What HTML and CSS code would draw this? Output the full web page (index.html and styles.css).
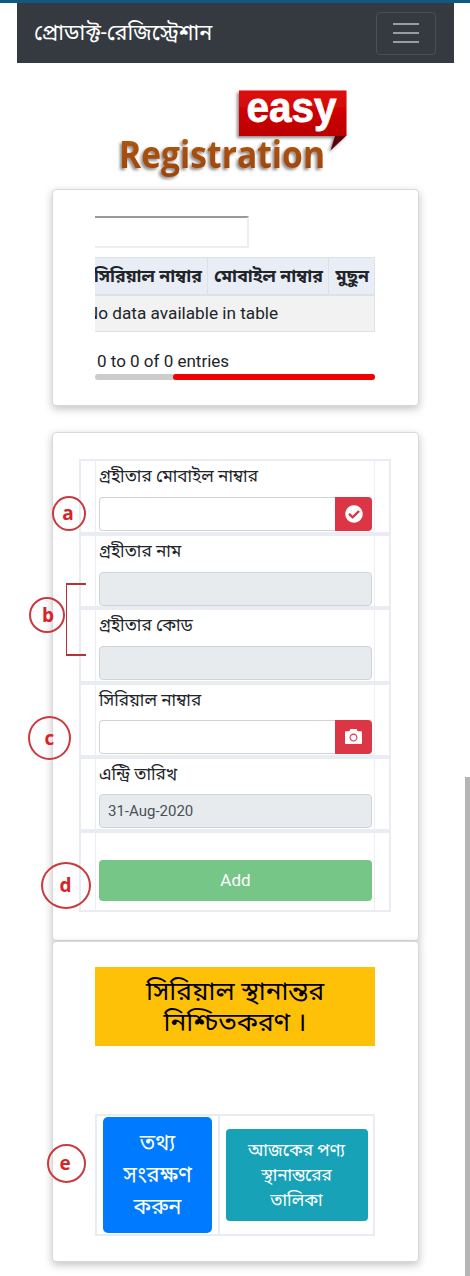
FILE: index.html
```html
<!DOCTYPE html>
<html lang="bn">
<head>
<meta charset="utf-8">
<title>প্রোডাক্ট-রেজিস্ট্রেশান</title>
<link rel="stylesheet" href="styles.css">
</head>
<body>
<div class="page">
  <header class="navbar">
    <span class="brand">প্রোডাক্ট-রেজিস্ট্রেশান</span>
    <button class="toggler" aria-label="Menu"><i></i><i></i><i></i></button>
  </header>

  <div class="logo">
    <svg width="250" height="110" viewBox="110 80 250 110">
      <defs>
        <linearGradient id="red" x1="0" y1="0" x2="0" y2="1"><stop offset="0" stop-color="#e00b0b"/><stop offset=".5" stop-color="#cc0505"/><stop offset="1" stop-color="#b00"/></linearGradient>
        <linearGradient id="brown" x1="0" y1="0" x2="0" y2="1"><stop offset="0" stop-color="#b45a14"/><stop offset="1" stop-color="#9c4406"/></linearGradient>
        <filter id="shade" x="-20%" y="-20%" width="140%" height="150%"><feDropShadow dx="-2" dy="2" stdDeviation="1.800" flood-color="#333" flood-opacity=".55"/></filter>
      </defs>
      <g filter="url(#shade)">
        <path d="M331 135.500H346.500L330.500 150.500L335 136Z" fill="#5b0508"/>
        <path d="M239 90.500H346.500V136H239Z" fill="url(#red)"/>
      </g>
      <text class="logo-easy" x="246.500" y="122" textLength="90" lengthAdjust="spacingAndGlyphs">easy</text>
      <text class="logo-reg" x="119" y="168" textLength="206" lengthAdjust="spacingAndGlyphs" filter="url(#shade)">Registration</text>
    </svg>
  </div>

  <main class="cards">
    <section class="card list-card">
      <div class="scroller">
        <div class="search"></div>
        <div class="table">
          <div class="thead"><span><b>সিরিয়াল নাম্বার</b></span><span><b>মোবাইল নাম্বার</b></span><span><b>মুছুন</b></span></div>
          <div class="tempty"><span>No data available in table</span></div>
        </div>
        <div class="info">0 to 0 of 0 entries</div>
        <div class="hbar"><div class="thumb"></div></div>
      </div>
    </section>

    <section class="card form-card">
      <div class="form">
        <div class="row tall"><label>গ্রহীতার মোবাইল নাম্বার</label>
          <div class="field"><div class="input"></div><button class="addon" aria-label="Check">
            <svg width="18" height="18" viewBox="0 0 512 512"><path fill="#fff" d="M504 256c0 136.967-111.033 248-248 248S8 392.967 8 256 119.033 8 256 8s248 111.033 248 248zM227.314 387.314l184-184c6.248-6.248 6.248-16.379 0-22.627l-22.627-22.627c-6.248-6.249-16.379-6.249-22.628 0L216 308.118l-70.059-70.059c-6.248-6.248-16.379-6.248-22.628 0l-22.627 22.627c-6.248 6.248-6.248 16.379 0 22.627l104 104c6.249 6.249 16.379 6.249 22.628.001z"/></svg></button></div></div>
        <div class="row"><label>গ্রহীতার নাম</label><div class="field"><div class="input off"></div></div></div>
        <div class="row tall"><label>গ্রহীতার কোড</label><div class="field"><div class="input off"></div></div></div>
        <div class="row tight"><label>সিরিয়াল নাম্বার</label>
          <div class="field"><div class="input"></div><button class="addon" aria-label="Camera">
            <svg class="camera" width="17" height="17" viewBox="0 0 512 512"><path fill="#fff" d="M512 120v336c0 14-10 24-24 24H24c-14 0-24-10-24-24V120c0-14 10-24 24-24h112l10-36c4-16 16-28 32-28h156c16 0 28 12 32 28l10 36h112c14 0 24 10 24 24zM376 288c0-66.200-53.800-120-120-120s-120 53.800-120 120 53.800 120 120 120 120-53.800 120-120zm-32 0c0 48.500-39.500 88-88 88s-88-39.500-88-88 39.500-88 88-88 88 39.500 88 88z"/></svg></button></div></div>
        <div class="row tight"><label>এন্ট্রি তারিখ</label><div class="field"><div class="input off">31-Aug-2020</div></div></div>
        <div class="row last"><button class="add">Add</button></div>
      </div>
    </section>

    <section class="card confirm-card">
      <h1 class="banner">সিরিয়াল স্থানান্তর<br>নিশ্চিতকরণ ।</h1>
      <div class="actions">
        <div class="cell"><button class="save">তথ্য<br>সংরক্ষণ<br>করুন</button></div>
        <div class="cell"><button class="today">আজকের পণ্য<br>স্থানান্তরের<br>তালিকা</button></div>
      </div>
    </section>
  </main>

  <div class="page-thumb"></div>
  <div class="note note-a">a</div>
  <div class="note note-b">b</div>
  <div class="bracket"></div>
  <div class="note note-c">c</div>
  <div class="note note-d">d</div>
  <div class="note note-e">e</div>
</div>
</body>
</html>
```
FILE: styles.css
```css
* { box-sizing: border-box; }
body { margin: 0; background: #fff; }
button { border: 0; padding: 0; font: inherit; color: #fff; }
.page {
  position: relative; width: 470px; height: 1276px; overflow: hidden;
  border-top: 3px solid #105a82;
  font-family: Roboto, "Noto Sans Bengali", "Noto Sans", sans-serif;
  font-size: 17px; color: #212529;
}
.navbar {
  margin: 0 16px 0 17px; height: 60px; padding: 0 18px 0 17px;
  display: flex; align-items: center; justify-content: space-between;
  background: #353a41; color: #fff;
}
.brand { font-size: 21.600px; white-space: nowrap; padding-top: 2px; }
.toggler {
  width: 60px; height: 43px; border: 1px solid #4a4f54; border-radius: 4px; background: none;
  display: flex; flex-direction: column; align-items: center; justify-content: center; gap: 7px;
}
.toggler i { width: 26px; height: 2px; background: #9a9da0; }
.logo { height: 126px; padding: 17px 0 0 110px; }
.logo svg { display: block; }
.logo-easy { font: bold 42px "Liberation Sans", sans-serif; fill: #fff; stroke: #fff; stroke-width: .8px; }
.logo-reg { font: bold 38px "Open Sans", sans-serif; fill: url(#brown); }

.cards { padding: 0 51px 0 52px; }
.card {
  border: 1px solid #d8d9da; border-radius: 4px; background: #fff;
  box-shadow: 0 3px 8px rgba(0, 0, 0, .24);
}
.list-card { height: 217px; padding: 26px 43px 0 42px; }
.form-card { height: 509px; margin-top: 26px; padding: 26px 27px 0 26px; }
.confirm-card { height: 321px; padding: 25px 43px 0 42px; }

.scroller { overflow: hidden; }
.search { width: 154px; height: 32px; border: solid #eee; border-width: 2px 2px 2px 0; border-top-color: #999; }
.table { margin-top: 9px; height: 75px; border: 1px solid #dee2e6; border-left: 0; }
.thead {
  display: grid; grid-template-columns: 113px 121px 1fr; height: 38px;
  background: #e9edf5; border-bottom: 2px solid #dee2e6; line-height: 36px; white-space: nowrap;
}
.thead span { display: flex; justify-content: flex-end; padding-right: 5px; border-right: 1px solid #dee2e6; }
.thead span:last-child { border: 0; }
.thead b { font-weight: 700; font-size: 17.700px; }
.tempty { height: 35px; background: #f2f2f2; line-height: 34px; overflow: hidden; }
.tempty span { display: block; margin-left: -9px; white-space: nowrap; font-size: 17.200px; }
.info { height: 42px; padding: 19px 0 0 2px; line-height: 20px; }
.hbar { height: 6px; border-radius: 3px; background: #ccc; display: flex; justify-content: flex-end; }
.thumb { width: 202px; border-radius: 3px; background: #f00000; }

.form { width: 312px; height: 453px; border: 2px solid #e9ecf2; }
.row {
  height: 74px; padding: 0 17px 0 18px; border-bottom: 4px solid #e9ecf2;
  background: linear-gradient(#eceef3, #eceef3) 14px 0 / 1px 100% no-repeat,
              linear-gradient(#eceef3, #eceef3) 293px 0 / 1px 100% no-repeat;
}
.row.tall { height: 75px; }
.row.last { height: 77px; border: 0; padding-top: 27px; }
.row label { display: block; height: 36px; line-height: 30px; white-space: nowrap; font-size: 17.200px; }
.row.tight label { height: 35px; line-height: 30px; }
.field { display: flex; height: 34px; }
.input {
  flex: 1; border: 1px solid #ced4da; border-radius: 4px; padding-left: 8px;
  line-height: 32px; font-size: 15px; color: #495057;
}
.off { background: #e8ebee; }
.input:not(:last-child) { border-radius: 4px 0 0 4px; border-right: 0; }
.addon {
  width: 37px; border-radius: 0 4px 4px 0; background: #dc3545;
  display: flex; align-items: center; justify-content: center;
}
.camera { margin-bottom: 2px; }
.add { display: block; width: 100%; height: 41px; border-radius: 4px; background: #75c687; padding-bottom: 1px; }

.banner {
  margin: 0; height: 79px; padding-top: 9px; background: #ffc107; color: #000;
  font-size: 26.300px; font-weight: 400; line-height: 31px; text-align: center;
}
.actions {
  margin-top: 68px; height: 122px; display: grid; grid-template-columns: 123px 1fr;
  border: 2px solid #e9ecf2;
}
.cell { display: flex; align-items: center; justify-content: center; }
.cell:first-child { border-right: 2px solid #e9ecf2; }
.save { width: 109px; height: 116px; border-radius: 5px; background: #007bff; font-size: 21.800px; line-height: 32px; }
.today { width: 142px; height: 92px; border-radius: 4px; background: #17a2b8; font-size: 17.200px; line-height: 25px; }

.page-thumb { position: absolute; right: 0; top: 774px; width: 5px; height: 499px; background: #b5b5b5; }
.note {
  position: absolute; border: 2px solid #c93a40; border-radius: 50%;
  display: flex; align-items: center; justify-content: center;
  font: bold 19px "Open Sans", sans-serif; color: #d82329; padding-bottom: 1px;
}
.note-a { left: 52px; top: 493px; width: 34px; height: 35px; padding-right: 2px; }
.note-b { left: 29px; top: 594px; width: 36px; height: 36px; padding-left: 2px; }
.note-c { left: 28px; top: 713px; width: 43px; height: 44px; }
.note-d { left: 41px; top: 859px; width: 50px; height: 47px; padding-right: 1px; }
.note-e { left: 47px; top: 1141px; width: 39px; height: 39px; padding-right: 3px; }
.bracket {
  position: absolute; left: 66px; top: 580px; width: 20px; height: 73px;
  border: solid #b8323a; border-width: 2px 0 2px 1px;
}
```
